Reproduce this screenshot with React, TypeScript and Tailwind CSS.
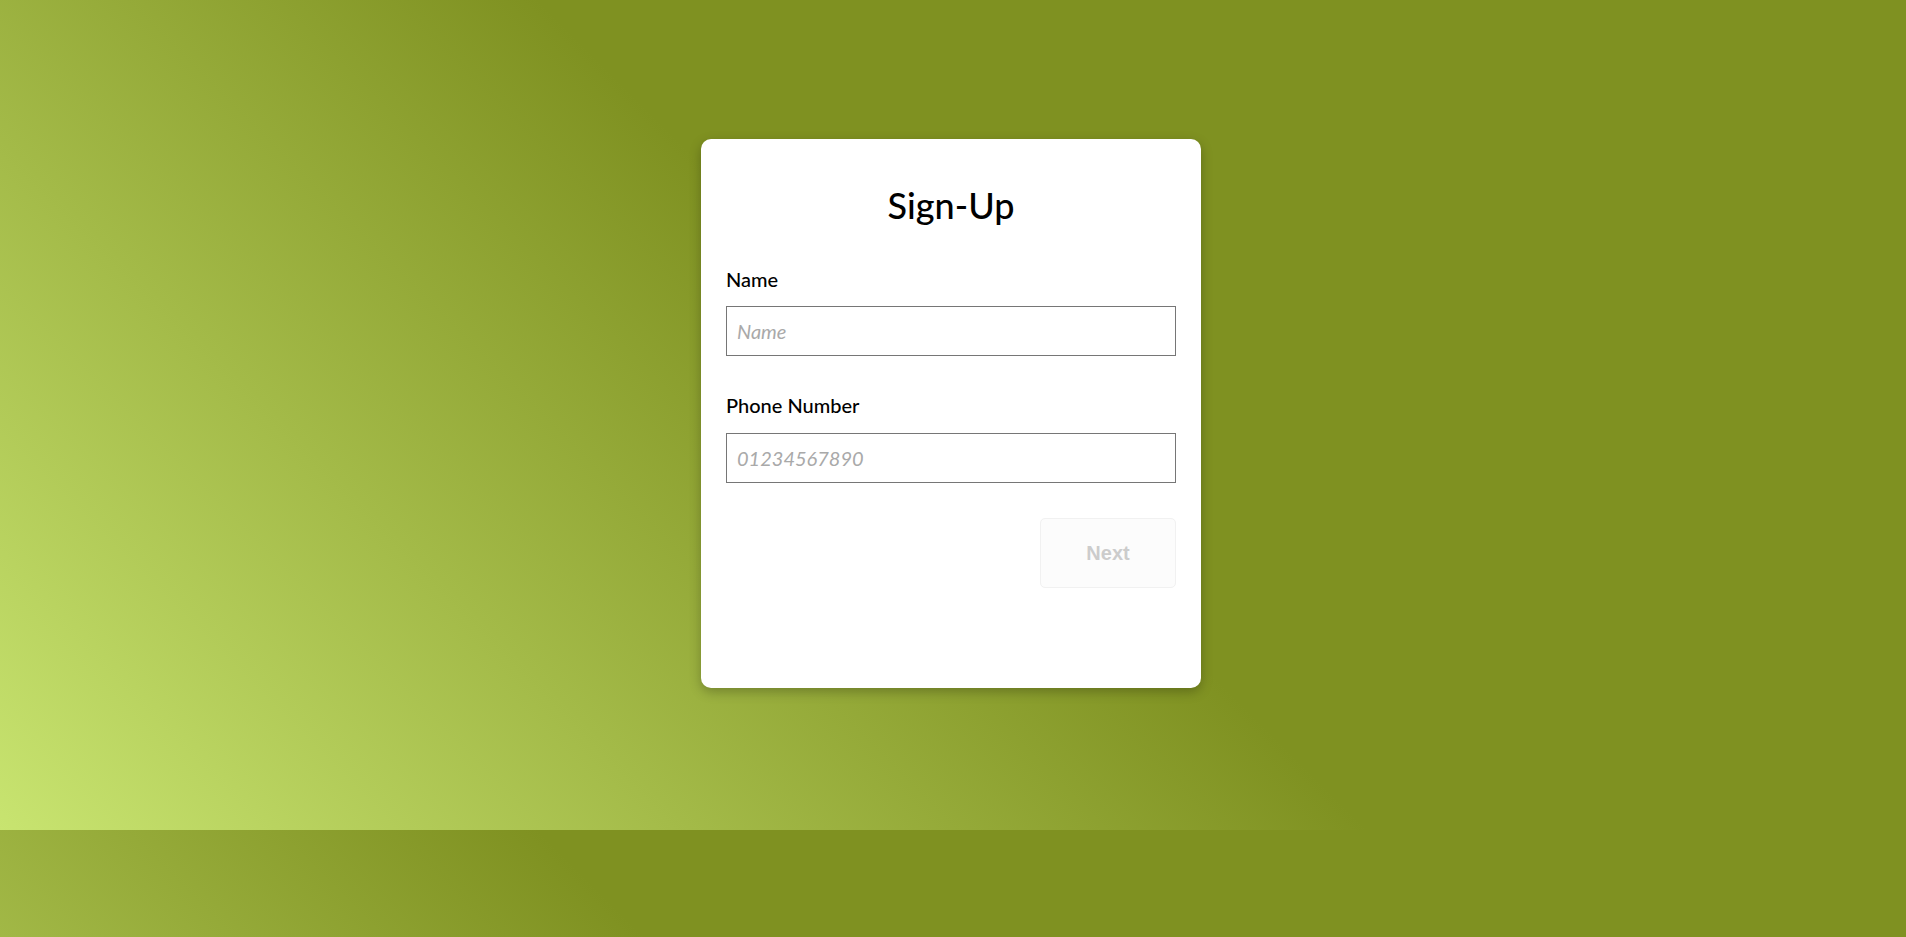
export default function App() {
  return (
    <div
      className="min-h-[937px] w-full bg-[linear-gradient(45deg,#c8e470_0%,#7f9121_50%)] bg-[length:100%_830px] bg-repeat"
      style={{ fontFamily: "Lato, 'Open Sans', sans-serif" }}
    >
      <div className="flex justify-center pt-[139px] pr-[4px]">
        {/* Card */}
        <form
          className="w-[500px] rounded-[10px] bg-white px-[25px] pt-[44px] pb-[100px] shadow-[0_4px_12px_rgba(0,0,0,0.25)]"
          onSubmit={(e) => e.preventDefault()}
        >
          <h1 className="text-center text-[36px] leading-[44px] font-medium text-black">
            Sign-Up
          </h1>

          <label className="mt-[40px] block text-[20px] leading-[24px] font-medium text-black">
            Name
          </label>
          <input
            type="text"
            placeholder="Name"
            className="mt-[15px] block h-[50px] w-full border border-[#767676] bg-white px-[10px] text-[20px] text-black outline-none placeholder:text-[#a9a9a9] placeholder:italic"
          />

          <label className="mt-[37px] block text-[20px] leading-[24px] font-medium text-black">
            Phone Number
          </label>
          <input
            type="tel"
            placeholder="01234567890"
            className="mt-[16px] block h-[50px] w-full border border-[#767676] bg-white px-[10px] text-[20px] text-black outline-none placeholder:text-[#a9a9a9] placeholder:italic"
          />

          <div className="mt-[35px] flex justify-end">
            <button
              type="submit"
              disabled
              className="h-[70px] w-[136px] rounded-[5px] border border-[#f1f1f1] bg-[#fcfcfc] text-[20px] font-bold text-[#cccccc]"
              style={{ fontFamily: "'Liberation Sans', Arial, sans-serif" }}
            >
              Next
            </button>
          </div>
        </form>
      </div>
    </div>
  );
}
